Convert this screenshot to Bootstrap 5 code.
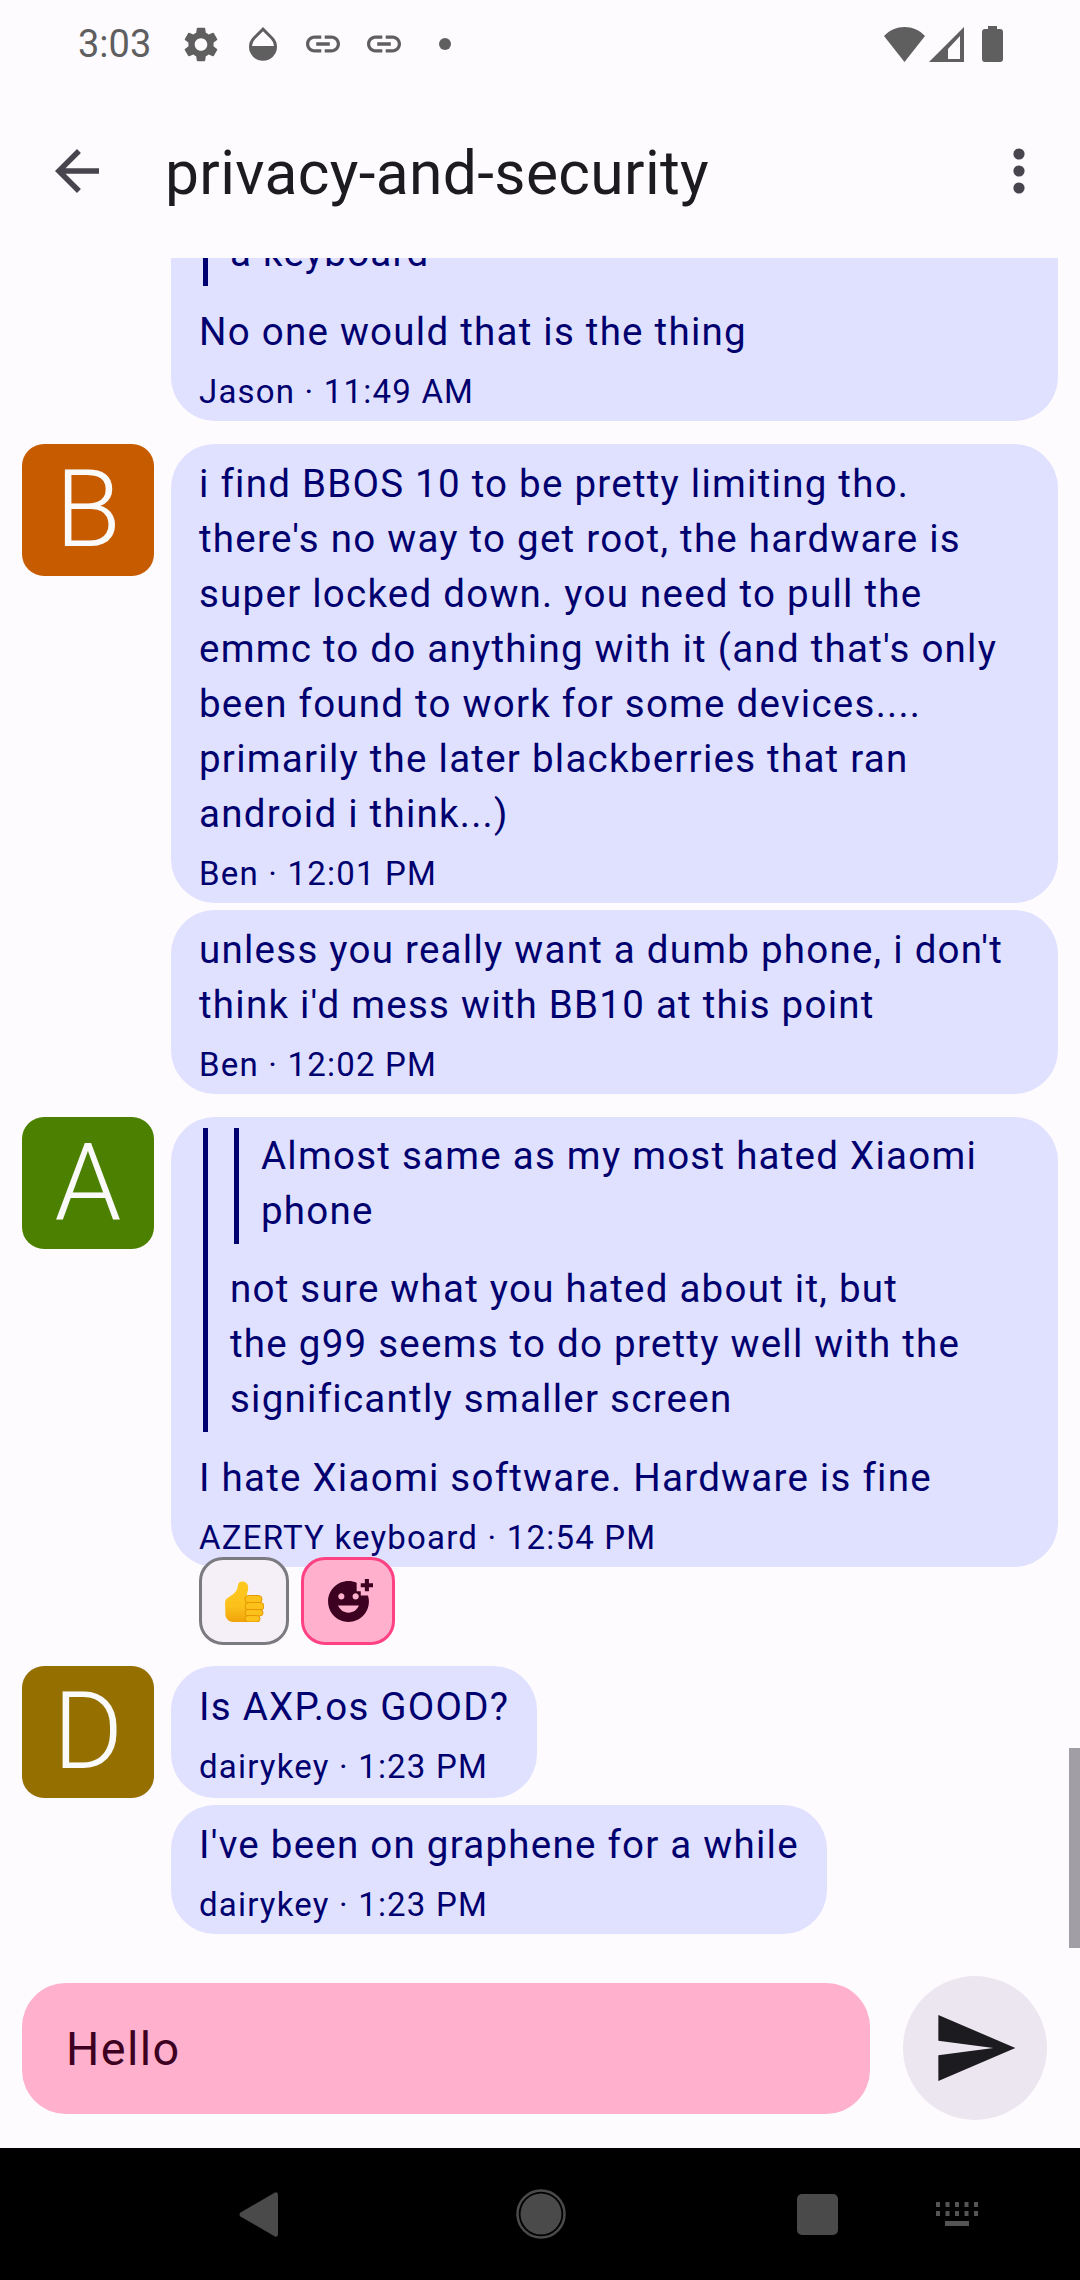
<!DOCTYPE html>
<html lang="en">
  <head>
    <meta charset="UTF-8" />
    <meta name="viewport" content="width=device-width, initial-scale=1.0" />
    <title>privacy-and-security</title>
    <link href="https://cdn.jsdelivr.net/npm/bootstrap@5.3.0/dist/css/bootstrap.min.css" rel="stylesheet" />
    <style>
      html, body { margin: 0; height: 2280px; overflow: hidden; }
      body { background-color: #fefbff; font-family: Roboto, "Liberation Sans", sans-serif; }
      .app-shell { height: 2280px; }

      /* status bar */
      .status-strip { height: 88px; padding-left: 78px; color: #5f5f5f; flex: none; }
      .status-time { font-size: 38px; width: 106px; }
      .status-strip svg { display: block; fill: #5f5f5f; }
      .st-gear { margin-right: 31px; }
      .st-drop { margin-right: 29px; }
      .st-link { margin-right: 27px; }
      .st-link.st-last { margin-right: 38px; }
      .st-right { padding-right: 77px; gap: 4px; }
      .st-batt { margin-left: 14px; }

      /* top bar */
      .top-strip { height: 170px; flex: none; padding-left: 55px; padding-right: 55px; padding-bottom: 4px; }
      .top-strip svg { display: block; }
      .top-title { font-size: 60.5px; color: #1c1b1f; margin-left: 66px; margin-top: 5px; line-height: 77px; letter-spacing: 0.35px; }

      /* messages */
      .chat-list { min-height: 0; overflow: hidden; position: relative; padding: 0 22px 14px; }
      .msg-group { gap: 17px; flex: none; margin-top: 23px; }
      .msg-group.first-group { margin-top: 0; }
      .avatar-box { width: 132px; height: 132px; flex: none; border-radius: 22px; color: #fafafa; font-size: 107px; font-weight: 300; line-height: 132px; text-align: center; }
      .avatar-b { background: #c75b00; }
      .avatar-a { background: #4c8000; }
      .avatar-d { background: #957000; }
      .avatar-blank { width: 132px; flex: none; }
      .bubble-col { gap: 7px; min-width: 0; flex: 1; }
      .msg-bubble { align-self: flex-start; background: #e0e0ff; color: #00006e; border-radius: 44px; padding: 12px 28px 7px; font-size: 38.5px; line-height: 55px; letter-spacing: 1.25px; flex: none; }
      .bubble-tall { padding-top: 13px; padding-bottom: 9px; }
      .msg-foot { font-size: 33px; line-height: 44px; letter-spacing: 1.2px; margin-top: 11px; }
      .quote-block { border-left: 5px solid #00006e; margin: -1px 0 18px 4px; padding: 0 0 6px 22px; }
      .quote-block .quote-block { margin: 0 0 17px 4px; }
      .quote-block p, .msg-bubble p { margin: 0; }
      .react-row { gap: 12px; margin: -17px 0 -2px 28px; position: relative; }
      .react-chip { height: 88px; border-radius: 24px; border: 3px solid #7b7a80; background: #f5f0f7; width: 90px; }
      .react-add { width: 94px; background: #ffb0cd; border-color: #ff4081; }
      .scroll-thumb { position: absolute; right: 0; bottom: 0; width: 11px; height: 200px; background: #a19ea5; }

      /* input row */
      .input-strip { height: 200px; flex: none; padding: 0 33px 0 22px; gap: 33px; }
      .msg-input { height: 131px; border-radius: 44px; background: #ffb0cd; color: #3e0021; font-size: 46.75px; padding: 2px 0 0 44px; letter-spacing: 1.375px; flex: 1; }
      .send-btn { width: 144px; height: 144px; border-radius: 50%; background: #ece6f0; flex: none; }

      /* nav bar */
      .nav-strip { height: 132px; background: #000; flex: none; padding-left: 239px; }
      .nav-strip svg { display: block; }
      .nv-home { margin-left: 238px; }
      .nv-square { margin-left: 231px; }
      .nv-keys { margin-left: 98px; }
    </style>
  </head>
  <body>
    <div class="app-shell d-flex flex-column">

      <!-- status bar -->
      <div class="status-strip d-flex align-items-center">
        <span class="status-time">3:03</span>
        <svg class="st-gear" width="34" height="35" viewBox="2.6 2 18.8 20"><path d="M19.14 12.94c.04-.3.06-.61.06-.94 0-.32-.02-.64-.07-.94l2.03-1.58a.49.49 0 0 0 .12-.61l-1.92-3.32a.488.488 0 0 0-.59-.22l-2.39.96c-.5-.38-1.03-.7-1.62-.94l-.36-2.54a.484.484 0 0 0-.48-.41h-3.84c-.24 0-.43.17-.47.41l-.36 2.54c-.59.24-1.13.57-1.62.94l-2.39-.96c-.22-.08-.47 0-.59.22L2.74 8.87c-.12.21-.08.47.12.61l2.03 1.58c-.05.3-.09.63-.09.94s.02.64.07.94l-2.03 1.58a.49.49 0 0 0-.12.61l1.92 3.32c.12.22.37.29.59.22l2.39-.96c.5.38 1.03.7 1.62.94l.36 2.54c.05.24.24.41.48.41h3.84c.24 0 .44-.17.47-.41l.36-2.54c.59-.24 1.13-.56 1.62-.94l2.39.96c.22.08.47 0 .59-.22l1.92-3.32c.12-.22.07-.47-.12-.61l-2.01-1.58zM12 15.6c-1.98 0-3.6-1.62-3.6-3.6s1.62-3.6 3.6-3.6 3.6 1.62 3.6 3.6-1.62 3.6-3.6 3.6z"/></svg>
        <svg class="st-drop" width="28" height="34" viewBox="0 0 28 34"><path fill-rule="evenodd" d="M14 0 L23.9 9.900 A14 14 0 1 1 4.100 9.900 Z M14 4.200 L6.200 12 A11 11 0 0 0 3 19 H25 A11 11 0 0 0 21.800 12 Z"/></svg>
        <svg class="st-link" width="34" height="34" viewBox="2 2 20 20"><path d="M3.900 12c0-1.710 1.390-3.100 3.100-3.100h4V7H7c-2.760 0-5 2.240-5 5s2.240 5 5 5h4v-1.900H7c-1.710 0-3.100-1.390-3.100-3.100zM8 13h8v-2H8v2zm9-6h-4v1.900h4c1.710 0 3.100 1.390 3.100 3.100s-1.390 3.100-3.100 3.100h-4V17h4c2.760 0 5-2.240 5-5s-2.240-5-5-5z"/></svg>
        <svg class="st-link st-last" width="34" height="34" viewBox="2 2 20 20"><path d="M3.900 12c0-1.710 1.390-3.100 3.100-3.100h4V7H7c-2.760 0-5 2.240-5 5s2.240 5 5 5h4v-1.900H7c-1.710 0-3.100-1.390-3.100-3.100zM8 13h8v-2H8v2zm9-6h-4v1.900h4c1.710 0 3.100 1.390 3.100 3.100s-1.390 3.100-3.100 3.100h-4V17h4c2.760 0 5-2.240 5-5s-2.240-5-5-5z"/></svg>
        <svg width="12" height="12" viewBox="0 0 12 12"><circle cx="6" cy="6" r="6"/></svg>
        <div class="st-right ms-auto d-flex align-items-center">
          <svg width="41" height="35" viewBox="0 0 41 35"><path d="M0 9 C11 -3 30 -3 41 9 L20.500 35 Z"/></svg>
          <svg width="35" height="35" viewBox="0 0 35 35"><path fill-rule="evenodd" d="M35 0 V35 H0 Z M31 9 L19 22 V32 H31 Z"/></svg>
          <svg class="st-batt" width="21" height="36" viewBox="0 0 21 36"><path d="M6 0 H15 V3 H18 Q21 3 21 6 V33 Q21 36 18 36 H3 Q0 36 0 33 V6 Q0 3 3 3 H6 Z"/></svg>
        </div>
      </div>

      <!-- top bar -->
      <div class="top-strip d-flex align-items-center">
        <svg width="44" height="44" viewBox="4 4 16 16"><path fill="#49454f" d="M20 11H7.830l5.590-5.590L12 4l-8 8 8 8 1.410-1.410L7.830 13H20v-2z"/></svg>
        <span class="top-title">privacy-and-security</span>
        <svg class="ms-auto" width="12" height="46" viewBox="0 0 12 46"><g fill="#49454f"><circle cx="6" cy="6" r="5.600"/><circle cx="6" cy="23" r="5.600"/><circle cx="6" cy="40" r="5.600"/></g></svg>
      </div>

      <!-- messages -->
      <div class="chat-list flex-grow-1 d-flex flex-column justify-content-end">

        <div class="msg-group first-group d-flex">
          <div class="avatar-blank"></div>
          <div class="bubble-col d-flex flex-column">
            <div class="msg-bubble w-100">
              <div class="quote-block"><p>a keyboard</p></div>
              <p>No one would that is the thing</p>
              <div class="msg-foot">Jason · 11:49 AM</div>
            </div>
          </div>
        </div>

        <div class="msg-group d-flex">
          <div class="avatar-box avatar-b">B</div>
          <div class="bubble-col d-flex flex-column">
            <div class="msg-bubble w-100">
              <p>i find BBOS 10 to be pretty limiting tho. there's no way to get root, the hardware is super locked down. you need to pull the emmc to do anything with it (and that's only been found to work for some devices.... primarily the later blackberries that ran android i think...)</p>
              <div class="msg-foot">Ben · 12:01 PM</div>
            </div>
            <div class="msg-bubble w-100">
              <p>unless you really want a dumb phone, i don't think i'd mess with BB10 at this point</p>
              <div class="msg-foot">Ben · 12:02 PM</div>
            </div>
          </div>
        </div>

        <div class="msg-group d-flex">
          <div class="avatar-box avatar-a">A</div>
          <div class="bubble-col d-flex flex-column">
            <div class="msg-bubble w-100">
              <div class="quote-block">
                <div class="quote-block"><p>Almost same as my most hated Xiaomi phone</p></div>
                <p>not sure what you hated about it, but<br />the g99 seems to do pretty well with the significantly smaller screen</p>
              </div>
              <p>I hate Xiaomi software. Hardware is fine</p>
              <div class="msg-foot">AZERTY keyboard · 12:54 PM</div>
            </div>
            <div class="react-row d-flex">
              <div class="react-chip d-flex align-items-center justify-content-center">
                <svg width="40" height="41" viewBox="0 0 40 41">
                  <defs><linearGradient id="thumbFill" x1="0" y1="0" x2="0" y2="1"><stop offset="0" stop-color="#fdc81f"/><stop offset="0.6" stop-color="#fcc21b"/><stop offset="1" stop-color="#f0a30a"/></linearGradient></defs>
                  <path fill="url(#thumbFill)" d="M1 22 Q1 18 5 16 C10 13 13.500 10 14 4 C14.300 1 17 0 19.500 0.500 C23.500 1.500 24.800 5 24 9 L22.800 14 L24 41 L9 41 Q3 40.500 1.500 35 Z"/>
                  <g fill="#fcc21b" stroke="#e59600" stroke-width="1"><rect x="21" y="14.500" width="17" height="7.500" rx="3.700"/><rect x="21" y="21.500" width="19" height="7.500" rx="3.700"/><rect x="21" y="28.500" width="18" height="6.500" rx="3.200"/><rect x="21" y="34.500" width="15" height="6.500" rx="3.200"/></g>
                </svg>
              </div>
              <div class="react-chip react-add d-flex align-items-center justify-content-center">
                <svg width="49" height="49" viewBox="0 0 24 24"><path fill="#3e0021" d="M18 9V7h-2V2.840C14.770 2.300 13.420 2 11.990 2 6.470 2 2 6.480 2 12s4.470 10 9.990 10C17.520 22 22 17.520 22 12c0-1.050-.170-2.050-.470-3H18zm-2.500-1c.830 0 1.500.670 1.500 1.500s-.670 1.500-1.500 1.500-1.500-.670-1.500-1.500.670-1.500 1.500-1.500zm-7 0c.830 0 1.500.670 1.500 1.500S9.330 11 8.500 11 7 10.330 7 9.500 7.670 8 8.500 8zm3.500 9.500c-2.330 0-4.310-1.460-5.110-3.500h10.220c-.800 2.040-2.780 3.500-5.110 3.500zM22 3h2v2h-2v2h-2V5h-2V3h2V1h2v2z"/></svg>
              </div>
            </div>
          </div>
        </div>

        <div class="msg-group d-flex">
          <div class="avatar-box avatar-d">D</div>
          <div class="bubble-col d-flex flex-column">
            <div class="msg-bubble bubble-tall">
              <p>Is AXP.os GOOD?</p>
              <div class="msg-foot">dairykey · 1:23 PM</div>
            </div>
            <div class="msg-bubble">
              <p>I've been on graphene for a while</p>
              <div class="msg-foot">dairykey · 1:23 PM</div>
            </div>
          </div>
        </div>

        <div class="scroll-thumb"></div>
      </div>

      <!-- input -->
      <div class="input-strip d-flex align-items-center">
        <div class="msg-input d-flex align-items-center">Hello</div>
        <div class="send-btn d-flex align-items-center justify-content-center">
          <svg width="88" height="88" viewBox="0 0 24 24"><path fill="#1c1b1f" d="M2.010 21L23 12 2.010 3 2 10l15 2-15 2z"/></svg>
        </div>
      </div>

      <!-- nav bar -->
      <div class="nav-strip d-flex align-items-center">
        <svg width="39" height="45" viewBox="0 0 39 45"><path fill="#4a4a4a" d="M35.500 .8 Q39 -1 39 3 V42 Q39 46 35.500 44.200 L1.500 24.500 Q-.5 22.500 1.500 20.500 Z"/></svg>
        <svg class="nv-home" width="50" height="50" viewBox="0 0 50 50"><circle cx="25" cy="25" r="20.500" fill="#4a4a4a"/><circle cx="25" cy="25" r="23.500" fill="none" stroke="#4a4a4a" stroke-width="2.500"/></svg>
        <svg class="nv-square" width="41" height="41" viewBox="0 0 41 41"><rect width="41" height="41" rx="5" fill="#4a4a4a"/></svg>
        <svg class="nv-keys" width="42" height="24" viewBox="0 0 42 24"><g fill="#555"><rect x="0" y="0" width="4" height="5"/><rect x="9.500" y="0" width="4" height="5"/><rect x="19" y="0" width="4" height="5"/><rect x="28.500" y="0" width="4" height="5"/><rect x="38" y="0" width="4" height="5"/><rect x="0" y="9" width="4" height="5"/><rect x="9.500" y="9" width="4" height="5"/><rect x="19" y="9" width="4" height="5"/><rect x="28.500" y="9" width="4" height="5"/><rect x="38" y="9" width="4" height="5"/><rect x="9" y="19" width="24" height="5"/></g></svg>
      </div>

    </div>
    <script src="https://cdn.jsdelivr.net/npm/bootstrap@5.3.0/dist/js/bootstrap.bundle.min.js"></script>
  </body>
</html>
